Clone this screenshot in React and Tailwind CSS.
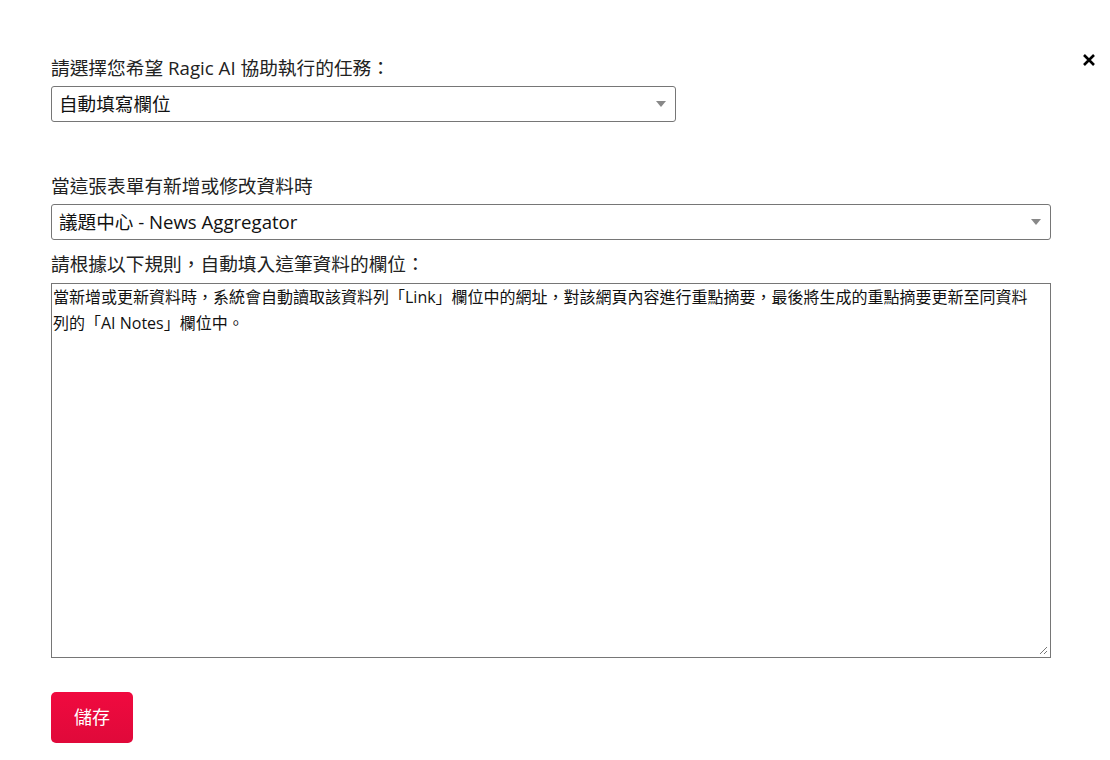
import React from 'react';

const font = { fontFamily: '"Open Sans", "Noto Sans CJK TC", sans-serif' };

const Caret = () => (
    <svg width="10" height="6" viewBox="0 0 10 6" className="absolute right-[9px] top-1/2 -translate-y-1/2">
        <path d="M0 0h10L5 6z" fill="#888" />
    </svg>
);

const SelectBox = ({ value, className }) => (
    <div className={`relative h-[36px] border border-[#767676] rounded-[3px] bg-white flex items-center pl-[7px] text-[18.6px] text-[#111] ${className}`}>
        <span>{value}</span>
        <Caret />
    </div>
);

export default function App() {
    return (
        <div className="relative w-[1110px] h-[760px] bg-white" style={font}>
            <button className="absolute right-[11px] top-[50px] w-[20px] h-[20px] flex items-center justify-center">
                <svg width="12" height="12" viewBox="0 0 12 12">
                    <path d="M1 1l10 10M11 1L1 11" stroke="#000" strokeWidth="2.6" />
                </svg>
            </button>

            <div className="pl-[51px] pr-[59px] pt-[54px]">
                <div className="text-[18.7px] text-[#222] leading-[28px] mb-[4px]">請選擇您希望 Ragic AI 協助執行的任務：</div>
                <SelectBox value="自動填寫欄位" className="w-[625px]" />

                <div className="text-[18.7px] text-[#222] leading-[28px] mt-[50px] mb-[4px]">當這張表單有新增或修改資料時</div>
                <SelectBox value="議題中心 - News Aggregator" className="w-[1000px]" />

                <div className="text-[18.7px] text-[#222] leading-[28px] mt-[10px] mb-[5px]">請根據以下規則，自動填入這筆資料的欄位：</div>
                <div className="relative w-[1000px] h-[375px] border border-[#767676] pl-[1px] pr-[10px] pt-0 text-[16px] leading-[26px] text-[#111]">
                    當新增或更新資料時，系統會自動讀取該資料列「Link」欄位中的網址，對該網頁內容進行重點摘要，最後將生成的重點摘要更新至同資料列的「AI Notes」欄位中。
                    <svg width="9" height="9" viewBox="0 0 9 9" className="absolute right-[2px] bottom-[2px]">
                        <path d="M8 1L1 8M8 5L5 8" stroke="#777" strokeWidth="1" />
                    </svg>
                </div>

                <button className="mt-[34px] w-[82px] h-[51px] rounded-[5px] bg-gradient-to-b from-[#f00a3f] to-[#e0093a] text-white text-[18px]">
                    儲存
                </button>
            </div>
        </div>
    );
}
